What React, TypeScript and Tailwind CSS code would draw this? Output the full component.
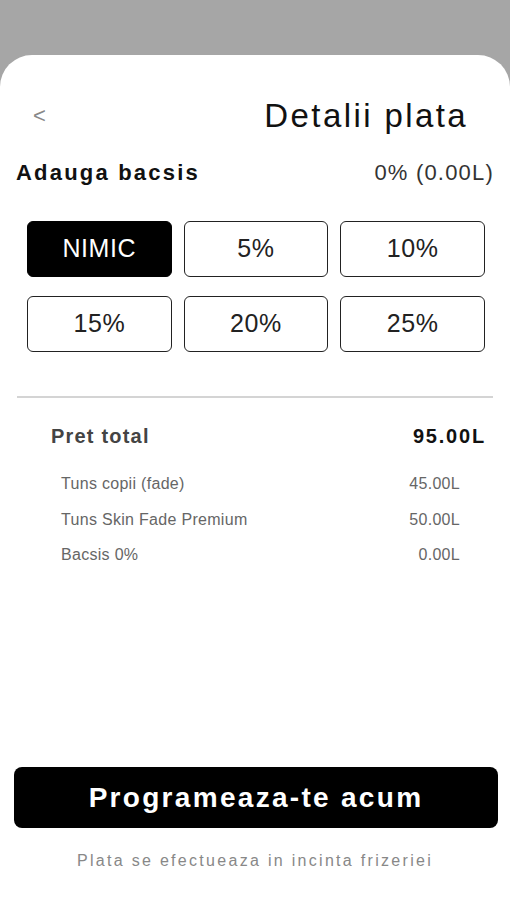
import { useState } from "react";

const tips = ["NIMIC", "5%", "10%", "15%", "20%", "25%"];

const items = [
  { name: "Tuns copii (fade)", price: "45.00L" },
  { name: "Tuns Skin Fade Premium", price: "50.00L" },
  { name: "Bacsis 0%", price: "0.00L" },
];

export default function App() {
  const [tip, setTip] = useState("NIMIC");

  return (
    <div className="min-h-[900px] bg-[#a6a6a6] pt-[55px] font-['Liberation_Sans',Arial,sans-serif]">
      <div className="flex h-[845px] flex-col rounded-t-[32px] bg-white">
        {/* header */}
        <div className="flex items-center justify-between pl-[33px] pr-[42px] pt-[41px]">
          <span className="text-[22px] leading-none text-[#888]">&lt;</span>
          <h1 className="text-[33px] font-normal leading-[40px] tracking-[2.4px] text-[#111]">Detalii plata</h1>
        </div>

        <div className="mt-[20px] flex items-center justify-between px-[16px]">
          <span className="text-[22px] font-bold tracking-[2.2px] text-[#111]">Adauga bacsis</span>
          <span className="text-[22px] tracking-[1.2px] text-[#333]">0% (0.00L)</span>
        </div>

        {/* tip buttons */}
        <div className="ml-[27px] mr-[25px] mt-[32px] grid grid-cols-3 gap-x-[12px] gap-y-[19px]">
          {tips.map((t) => (
            <button
              key={t}
              onClick={() => setTip(t)}
              className={
                tip === t
                  ? "h-[56px] rounded-[6px] border-[1.5px] border-black bg-black text-[25px] tracking-[0.6px] text-white"
                  : "h-[56px] rounded-[6px] border-[1.5px] border-[#222] bg-white text-[25px] tracking-[0.6px] text-[#222]"
              }
            >
              {t}
            </button>
          ))}
        </div>

        <div className="mx-[17px] mt-[44px] h-[2px] bg-[#d4d4d4]" />

        {/* totals */}
        <div className="mt-[23px] flex items-center justify-between pl-[51px] pr-[24px]">
          <span className="text-[20px] font-bold tracking-[1.2px] text-[#444]">Pret total</span>
          <span className="text-[20px] font-bold tracking-[1.8px] text-[#111]">95.00L</span>
        </div>

        <div className="mt-[23px] flex flex-col gap-[15.5px] pl-[61px] pr-[50px]">
          {items.map((it) => (
            <div key={it.name} className="flex items-center justify-between text-[16px] leading-[20px] tracking-[0.3px] text-[#666]">
              <span>{it.name}</span>
              <span>{it.price}</span>
            </div>
          ))}
        </div>

        <div className="flex-1" />

        <button className="ml-[14px] mr-[12px] h-[61px] rounded-[8px] bg-black text-[28px] font-bold tracking-[2.3px] text-white">
          Programeaza-te acum
        </button>
        <p className="mb-[27px] mt-[21px] text-center text-[16px] tracking-[2.3px] text-[#888]">
          Plata se efectueaza in incinta frizeriei
        </p>
      </div>
    </div>
  );
}
